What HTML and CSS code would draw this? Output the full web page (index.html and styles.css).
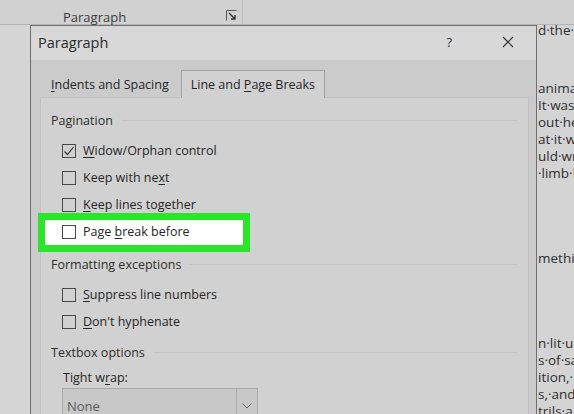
FILE: index.html
```html
<!DOCTYPE html>
<html>
<head>
<meta charset="utf-8">
<link rel="stylesheet" href="styles.css">
</head>
<body>
<div class="ribbon">
  <div class="ribbon-group">
    <span class="ribbon-label">Paragraph</span>
    <svg class="launcher" width="11" height="11" viewBox="0 0 11 11"><path d="M0.5 10.5V0.5H10.5" fill="none" stroke="#555" stroke-width="1"/><path d="M3 3L9 9M5 9H9V5" fill="none" stroke="#333" stroke-width="1.4"/></svg>
  </div>
</div>
<div class="main">
  <div class="gutter"></div>
  <div class="dialog">
    <div class="titlebar">
      <span class="title">Paragraph</span>
      <span class="help">?</span>
      <svg class="close" width="12" height="12" viewBox="0 0 12 12"><path d="M1 1L11 11M11 1L1 11" stroke="#333" stroke-width="1.2"/></svg>
    </div>
    <div class="body">
      <div class="tabs">
        <div class="tab"><span><u>I</u>ndents and Spacing</span></div>
        <div class="tab active"><span>Line and <u>P</u>age Breaks</span></div>
      </div>
      <div class="panel">
        <div class="group">Pagination</div>
        <div class="row"><span class="cb checked"><svg width="12" height="12" viewBox="0 0 12 12"><path d="M1.5 6.5L4.5 9.5L10.5 2" fill="none" stroke="#333" stroke-width="1.2"/></svg></span><span><u>W</u>idow/Orphan control</span></div>
        <div class="row"><span class="cb"></span><span>Keep with ne<u>x</u>t</span></div>
        <div class="row"><span class="cb"></span><span><u>K</u>eep lines together</span></div>
        <div class="row highlight"><span class="cb"></span><span>Page <u>b</u>reak before</span></div>
        <div class="group">Formatting exceptions</div>
        <div class="row"><span class="cb"></span><span><u>S</u>uppress line numbers</span></div>
        <div class="row"><span class="cb"></span><span><u>D</u>on't hyphenate</span></div>
        <div class="group gap">Textbox options</div>
        <div class="field-label"><span>Tight w<u>r</u>ap:</span></div>
        <div class="select">
          <span class="select-value">None</span>
          <span class="select-arrow"><svg width="10" height="6" viewBox="0 0 10 6"><path d="M0.5 0.5L5 5L9.5 0.5" fill="none" stroke="#666" stroke-width="1"/></svg></span>
        </div>
      </div>
    </div>
  </div>
  <div class="doc">
    <div class="line first">d·the·r</div>
    <div class="line sp2">anima</div>
    <div class="line">It·was</div>
    <div class="line">out·he</div>
    <div class="line">at·it·w</div>
    <div class="line">uld·wr</div>
    <div class="line">·limb·l</div>
    <div class="line sp4">methi</div>
    <div class="line sp4">n·lit·up</div>
    <div class="line">s·of·sa</div>
    <div class="line">ition,·</div>
    <div class="line">s,·and·</div>
    <div class="line">trils·a</div>
  </div>
</div>
</body>
</html>
```
FILE: styles.css
```css
html, body {
  margin: 0;
  padding: 0;
}
body {
  width: 574px;
  height: 414px;
  overflow: hidden;
  background: #d5d5d5;
  font-family: "Open Sans", "Noto Sans", sans-serif;
  color: #262626;
}
u {
  text-decoration-thickness: 1px;
  text-underline-offset: 2px;
}
.ribbon {
  height: 25px;
  box-sizing: border-box;
  background: #d1d1d1;
  border-bottom: 1px solid #b4b4b4;
  display: flex;
}
.ribbon-group {
  width: 243px;
  box-sizing: border-box;
  border-right: 1px solid #bcbcbc;
  display: flex;
  align-items: center;
  padding-left: 63px;
  padding-right: 5px;
  padding-top: 9px;
}
.ribbon-label {
  font-size: 13px;
  color: #3c3c3c;
  flex: 1;
}
.launcher {
  margin-top: -2px;
}
.main {
  display: flex;
  height: 389px;
}
.gutter {
  width: 30px;
  flex: none;
}
.dialog {
  width: 507px;
  flex: none;
  box-sizing: border-box;
  border: 1px solid #6f6f6f;
  border-bottom: none;
  background: #d8d8d8;
  display: flex;
  flex-direction: column;
  box-shadow: 1px 0 0 #bdbdbd;
}
.titlebar {
  height: 34px;
  flex: none;
  box-sizing: border-box;
  display: flex;
  align-items: center;
  padding-left: 7px;
  padding-bottom: 2px;
}
.title {
  font-size: 14.5px;
  color: #2a2a2a;
  flex: 1;
}
.help {
  font-size: 13px;
  color: #333;
  margin-right: 50px;
}
.close {
  margin-right: 22px;
}
.body {
  flex: 1;
  background: #cbcbcb;
  padding: 10px 7px 0 9px;
  display: flex;
  flex-direction: column;
}
.tabs {
  display: flex;
  height: 27px;
  gap: 2px;
  padding-left: 1px;
  position: relative;
  z-index: 1;
  font-size: 12.5px;
}
.tab {
  padding: 0 9px;
  display: flex;
  align-items: center;
  border: 1px solid transparent;
  border-bottom: none;
  box-sizing: border-box;
}
.tab.active {
  background: #d1d1d1;
  border-color: #a3a3a3;
  height: 28px;
}
.panel {
  flex: 1;
  background: #d1d1d1;
  border: 1px solid #c2c2c2;
  border-bottom: none;
  padding: 11px 10px 0 10px;
  font-size: 12.5px;
}
.group {
  display: flex;
  align-items: center;
  height: 22px;
  color: #2e2e2e;
}
.group::after {
  content: "";
  flex: 1;
  height: 1px;
  background: #c3c3c3;
  margin-left: 8px;
}
.group.gap {
  margin-top: 6px;
}
.row {
  display: flex;
  align-items: center;
  height: 27px;
  padding-left: 11px;
  gap: 7px;
}
.cb {
  width: 14px;
  height: 14px;
  box-sizing: border-box;
  border: 1px solid #4a4a4a;
  display: flex;
  align-items: center;
  justify-content: center;
}
.highlight {
  position: relative;
  z-index: 0;
}
.highlight::before {
  content: "";
  position: absolute;
  z-index: -1;
  left: -13px;
  top: -5px;
  width: 198px;
  height: 25px;
  background: #ffffff;
  border: 7px solid #2be52b;
}
.group + .row {
  margin-top: 6px;
}
.highlight + .group {
  margin-top: 8px;
}
.field-label {
  padding-left: 12px;
  margin-top: 3px;
  height: 23px;
  display: flex;
  align-items: center;
}
.select {
  margin-left: 11px;
  margin-top: -1px;
  width: 196px;
  height: 27px;
  box-sizing: border-box;
  border: 1px solid #a8a8a8;
  background: #c8c8c8;
  display: flex;
  align-items: center;
}
.select-value {
  flex: 1;
  padding-left: 4px;
  padding-top: 8px;
  color: #5a5a5a;
  font-size: 13px;
}
.select-arrow {
  width: 21px;
  height: 100%;
  box-sizing: border-box;
  border-left: 1px solid #adadad;
  display: flex;
  align-items: center;
  justify-content: center;
  padding-top: 9px;
}
.doc {
  flex: 1;
  overflow: hidden;
  white-space: nowrap;
  font-size: 13.5px;
  color: #2f2f2f;
  padding-left: 1px;
  background: #d4d4d4;
}
.line {
  height: 17px;
  line-height: 17px;
}
.line.first {
  margin-top: -3px;
}
.line.sp2 {
  margin-top: 41px;
}
.line.sp4 {
  margin-top: 68px;
}
```
